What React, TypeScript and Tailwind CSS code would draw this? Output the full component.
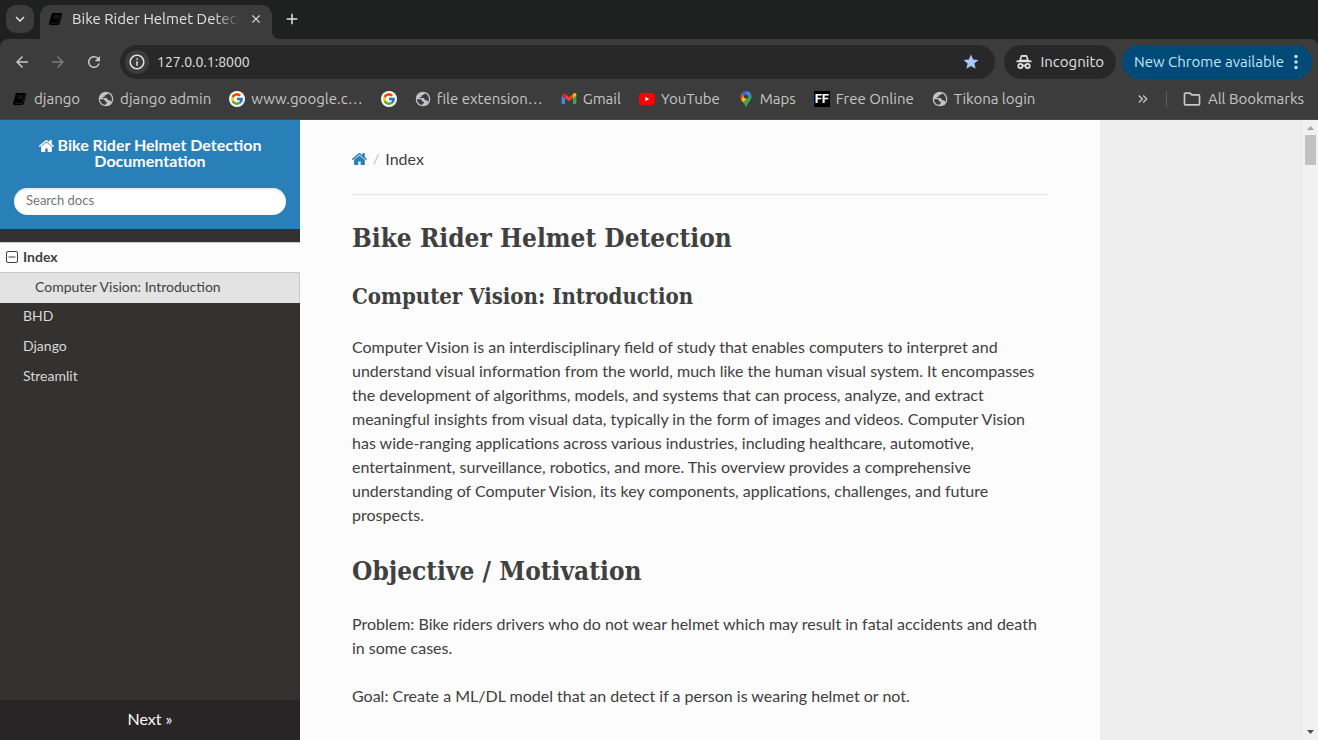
import type { ReactNode } from "react";
import { FcGoogle } from "react-icons/fc";
import {
  MdArrowBack,
  MdArrowForward,
  MdRefresh,
  MdStar,
  MdInfoOutline,
  MdClose,
  MdAdd,
  MdKeyboardArrowDown,
  MdOutlineFolder,
  MdKeyboardDoubleArrowRight,
} from "react-icons/md";

const HOME_PATH =
  "M1408 992v480q0 26-19 45t-45 19h-384v-384h-256v384h-384q-26 0-45-19t-19-45v-480q0-1 .5-3t.5-3l575-474 575 474q1 2 1 6zm223-69l-62 74q-8 9-21 11h-3q-13 0-21-7l-692-577-692 577q-12 8-24 7-13-2-21-11l-62-74q-8-10-7-23.5t11-21.5l719-599q32-26 76-26t76 26l244 204v-195q0-14 9-23t23-9h192q14 0 23 9t9 23v408l219 182q10 8 11 21.5t-7 23.5z";

function HomeIcon({ className }: { className: string }) {
  return (
    <svg viewBox="30 253 1612 1283" className={className} fill="currentColor" aria-hidden="true">
      <path d={HOME_PATH} />
    </svg>
  );
}

function BookIcon() {
  return (
    <svg viewBox="0 0 16 16" className="size-4 shrink-0" aria-hidden="true">
      <path
        d="M5.200 2h7.600c1.100 0 1.700.8 1.400 1.800L11.900 12.300c-.3 1.100-1.100 1.700-2.200 1.700H2.800c-1.200 0-2-.9-1.700-2.100L3.600 3.300C3.900 2.500 4.400 2 5.200 2z"
        fill="#000"
      />
      <path d="M6.200 5h5M5.600 7h5" stroke="#3a3a3a" strokeWidth=".7" />
      <path d="M2.600 12.200h7c.6 0 .9-.2 1.100-.8L13.200 3.600" stroke="#333" strokeWidth=".6" fill="none" />
    </svg>
  );
}

function GlobeIcon() {
  return (
    <svg viewBox="0 0 16 16" className="size-4 shrink-0" aria-hidden="true">
      <circle cx="8" cy="8" r="7.300" fill="#c0c4c9" />
      <path
        d="M9.800 2.200C9.700 3.300 9 3.900 8 3.900c-.8 0-1.200.4-1.200 1.100 0 .6-.4.9-1 .9-.9 0-1.300.5-1.300 1.100h3.200c1.200 0 1.900.6 1.900 1.500 0 .5.300.8.800.8h.9c.8 0 1.300.4 1.500 1.200l.3.600c.6-.9.9-1.900.9-3.100 0-2.700-1.700-4.900-4.200-5.800z"
        fill="#3c3c3c"
      />
      <path d="M2 8.200h3c1.300 0 1.900.7 1.900 1.700 0 .4.300.6.700.6h.6c.4 0 .6.300.6.700v.7c0 .6-.4.9-1 .9h-.3v1.100C4.500 13.700 2.200 11.300 2 8.200z" fill="#3c3c3c" />
    </svg>
  );
}

function GoogleIcon() {
  return (
    <span className="flex size-4 shrink-0 items-center justify-center rounded-full bg-white">
      <FcGoogle className="size-[14px]" />
    </span>
  );
}

function GmailIcon() {
  return (
    <svg viewBox="52 42 88 66" className="h-[11px] w-4 shrink-0" aria-hidden="true">
      <path fill="#4285f4" d="M58 108h14V74L52 59v43c0 3.320 2.690 6 6 6" />
      <path fill="#34a853" d="M120 108h14c3.320 0 6-2.690 6-6V59l-20 15" />
      <path fill="#fbbc04" d="M120 48v26l20-15v-8c0-7.420-8.470-11.650-14.400-7.200" />
      <path fill="#ea4335" d="M72 74V48l24 18 24-18v26L96 92" />
      <path fill="#c5221f" d="M52 51v8l20 15V48l-5.600-4.200c-5.940-4.450-14.400-.22-14.400 7.200" />
    </svg>
  );
}

function YouTubeIcon() {
  return (
    <svg viewBox="0 0 16 12" className="h-3 w-4 shrink-0" aria-hidden="true">
      <rect width="16" height="12" rx="3" fill="#f00" />
      <path d="M6.400 3.800v4.400l3.800-2.200z" fill="#fff" />
    </svg>
  );
}

function MapsIcon() {
  return (
    <svg viewBox="0 0 92.300 132.300" className="h-4 w-4 shrink-0" aria-hidden="true">
      <path fill="#1a73e8" d="M60.200 2.200C55.800.8 51 0 46.100 0 32 0 19.300 6.400 10.800 16.500l21.800 18.300L60.200 2.200z" />
      <path fill="#ea4335" d="M10.800 16.500C4.100 24.500 0 34.900 0 46.100c0 8.700 1.700 15.700 4.600 22l28-33.300-21.800-18.300z" />
      <path fill="#4285f4" d="M46.200 28.500c9.800 0 17.700 7.900 17.700 17.700 0 4.300-1.600 8.300-4.200 11.400 0 0 13.900-16.600 27.500-32.700-5.600-10.800-15.300-19-27-22.700L32.600 34.800c3.300-3.800 8.100-6.300 13.600-6.300" />
      <path fill="#fbbc04" d="M46.200 63.800c-9.800 0-17.700-7.900-17.700-17.700 0-4.300 1.500-8.300 4.100-11.300l-28 33.300c4.800 10.600 12.800 19.200 21 29.900l34.100-40.500c-3.300 3.900-8.100 6.300-13.500 6.300" />
      <path fill="#34a853" d="M59.100 109.200c15.400-24.100 33.300-35 33.300-63 0-7.700-1.900-14.900-5.200-21.300L25.600 98c2.600 3.400 5.300 7.300 7.900 11.300 9.400 14.500 6.800 23.100 12.800 23.100s3.400-8.700 12.800-23.200" />
    </svg>
  );
}

function FreeFontIcon() {
  return (
    <span className="flex size-4 shrink-0 items-center justify-center bg-black font-[Roboto] text-[13px] leading-4 font-bold text-white">
      FF
    </span>
  );
}

function IncognitoIcon() {
  return (
    <svg viewBox="0 0 16 16" className="size-4 shrink-0" fill="none" stroke="#e3e3e3" aria-hidden="true">
      <path d="M4 6.600 5.200 2.700c.2-.9 1-1.100 1.700-.8.7.3 1.500.3 2.200 0 .7-.3 1.500-.1 1.700.8L12 6.600z" strokeWidth="1.700" />
      <path d="M.5 7.300h15" strokeWidth="1.800" />
      <circle cx="4.400" cy="12" r="2.100" strokeWidth="1.800" />
      <circle cx="11.600" cy="12" r="2.100" strokeWidth="1.800" />
      <path d="M6.400 11.800q1.600-.8 3.200 0" strokeWidth="1.600" />
    </svg>
  );
}

const bookmarks: { icon: ReactNode; label: string }[] = [
  { icon: <BookIcon />, label: "django" },
  { icon: <GlobeIcon />, label: "django admin" },
  { icon: <GoogleIcon />, label: "www.google.c…" },
  { icon: <GoogleIcon />, label: "" },
  { icon: <GlobeIcon />, label: "file extension…" },
  { icon: <GmailIcon />, label: "Gmail" },
  { icon: <YouTubeIcon />, label: "YouTube" },
  { icon: <MapsIcon />, label: "Maps" },
  { icon: <FreeFontIcon />, label: "Free Online" },
  { icon: <GlobeIcon />, label: "Tikona login" },
];

function BrowserChrome() {
  return (
    <header className="shrink-0 bg-[#1f2020] font-['Ubuntu','Noto_Sans',sans-serif] text-[15px] leading-5 text-[#e3e3e3]">
      <div className="flex h-[39px] items-end pl-[6px]">
        <button aria-label="Search tabs" className="mb-[6px] flex size-7 items-center justify-center rounded-[10px] bg-[#3c3c3c]">
          <MdKeyboardArrowDown className="size-[18px]" />
        </button>
        <div className="ml-[6px] flex h-[34px] w-[232px] items-center rounded-t-[10px] bg-[#3c3c3c] pr-2 pb-[6px] pl-2">
          <BookIcon />
          <span className="ml-2 min-w-0 flex-1 overflow-hidden whitespace-nowrap [mask-image:linear-gradient(to_right,#000_85%,transparent)]">
            Bike Rider Helmet Detection
          </span>
          <button aria-label="Close tab" className="ml-2 flex size-4 items-center justify-center">
            <MdClose className="size-[14px]" />
          </button>
        </div>
        <span aria-hidden="true" className="size-2 bg-[radial-gradient(circle_at_top_right,transparent_8px,#3c3c3c_8px)]" />
        <button aria-label="New tab" className="mb-[10px] ml-[2px] flex size-5 items-center justify-center">
          <MdAdd className="size-[18px]" />
        </button>
      </div>
      <div className="rounded-t-lg bg-[#3c3c3c]">
        <div className="flex h-[46px] items-center pr-[6px] pl-3">
          <button aria-label="Back" className="flex size-5 items-center justify-center">
            <MdArrowBack className="size-[18px] text-[#c7c7c7]" />
          </button>
          <button aria-label="Forward" className="ml-4 flex size-5 items-center justify-center">
            <MdArrowForward className="size-[18px] text-[#7c7c7c]" />
          </button>
          <button aria-label="Reload" className="ml-4 flex size-5 items-center justify-center">
            <MdRefresh className="size-[18px] text-[#c7c7c7]" />
          </button>
          <div className="ml-4 flex h-[34px] flex-1 items-center rounded-full bg-[#282828] pr-[15px] pl-[5px]">
            <button aria-label="Site information" className="flex size-6 items-center justify-center rounded-full bg-[#3c3c3c]">
              <MdInfoOutline className="size-[18px]" />
            </button>
            <input
              aria-label="Address"
              defaultValue="127.0.0.1:8000"
              className="ml-2 min-w-0 flex-1 bg-transparent text-sm outline-none"
            />
            <button aria-label="Edit bookmark">
              <MdStar className="size-[18px] text-[#a8c7fa]" />
            </button>
          </div>
          <div className="ml-[9px] flex h-[34px] items-center gap-2 rounded-full bg-[#282828] px-3">
            <IncognitoIcon />
            <span>Incognito</span>
          </div>
          <button className="ml-[6px] flex h-[34px] items-center gap-1 rounded-full bg-[#004a77] pr-2 pl-3 text-[#c2e7ff]">
            New Chrome available
            <svg viewBox="0 0 16 16" className="size-4" fill="currentColor" aria-hidden="true">
              <circle cx="8" cy="2.500" r="1.700" />
              <circle cx="8" cy="8" r="1.700" />
              <circle cx="8" cy="13.500" r="1.700" />
            </svg>
          </button>
        </div>
        <nav aria-label="Bookmarks" className="flex h-[35px] items-center border-b border-[#474747] pr-[14px] pb-[7px] pl-3 text-[#c7c7c7]">
          <ul className="flex items-center gap-[18px]">
            {bookmarks.map((b, i) => (
              <li key={i}>
                <a href="#" aria-label={b.label || "Google"} className="flex items-center gap-[6px] whitespace-nowrap">
                  {b.icon}
                  {b.label && <span>{b.label}</span>}
                </a>
              </li>
            ))}
          </ul>
          <button aria-label="More bookmarks" className="ml-auto">
            <MdKeyboardDoubleArrowRight className="size-4" />
          </button>
          <span className="mx-[15px] h-4 w-px bg-[#5f5f5f]" />
          <button className="flex items-center gap-[6px] whitespace-nowrap">
            <MdOutlineFolder className="size-5" />
            All Bookmarks
          </button>
        </nav>
      </div>
    </header>
  );
}

function Sidebar() {
  return (
    <aside className="flex w-[300px] shrink-0 flex-col bg-[#343131] text-sm leading-[18px] text-[#d9d9d9]">
      <div className="bg-[#2980b9] px-[14px] pt-[17px] pb-[14px] text-center">
        <a href="#" className="block text-base leading-4 font-bold text-[#fcfcfc]">
          <HomeIcon className="mr-1 inline h-3 w-[15px] align-[-1px]" />
          Bike Rider Helmet Detection Documentation
        </a>
        <input
          type="text"
          aria-label="Search docs"
          placeholder="Search docs"
          className="mt-[19px] block h-[27px] w-full rounded-full bg-white px-3 pb-[3px] text-[13px] text-[#333] inset-shadow-[0_1px_3px_#ddd] placeholder:text-[#757575]"
        />
      </div>
      <nav aria-label="Contents" className="mt-[13px]">
        <a href="#" className="flex h-[30px] items-center border-t border-[#c9c9c9] bg-[#fcfcfc] pb-[2px] pl-[6px] font-bold text-[#404040]">
          <svg viewBox="0 0 12 12" className="mr-[5px] size-3" fill="none" stroke="#404040" aria-hidden="true">
            <rect x=".5" y=".5" width="11" height="11" rx="1.500" />
            <path d="M2.500 6h7" />
          </svg>
          Index
        </a>
        <a href="#" className="flex h-[31px] items-center border-t border-r border-[#c9c9c9] bg-[#e3e3e3] pb-[2px] pl-[35px] text-[#404040]">
          Computer Vision: Introduction
        </a>
        {["BHD", "Django", "Streamlit"].map((name) => (
          <a key={name} href="#" className="flex h-[30px] items-center pb-1 pl-[23px]">
            {name}
          </a>
        ))}
      </nav>
      <a href="#" className="mt-auto block bg-[#272525] pt-[7px] pb-[9px] text-center text-base leading-6 text-[#fcfcfc]">
        Next »
      </a>
    </aside>
  );
}

function Article() {
  const heading = "font-['Roboto_Slab','DejaVu_Serif_Condensed','DejaVu_Serif',serif] font-bold";
  return (
    <main className="w-full max-w-[800px] bg-[#fcfcfc] px-[52px] pt-[27px] text-base leading-6 text-[#404040]">
      <nav aria-label="Breadcrumb" className="flex items-center">
        <a href="#" aria-label="Home" className="text-[#2980b9]">
          <HomeIcon className="h-3 w-[15px]" />
        </a>
        <span className="mx-[6px] text-sm text-[#c0c0c0]">/</span>
        <span>Index</span>
      </nav>
      <hr className="mt-[23px] border-[#e1e4e5]" />
      <h1 className={`${heading} mt-[23px] text-[26px] leading-10`}>Bike Rider Helmet Detection</h1>
      <h2 className={`${heading} mt-5 text-[22px] leading-9`}>Computer Vision: Introduction</h2>
      <p className="mt-[21px]">
        Computer Vision is an interdisciplinary field of study that enables computers to interpret and understand
        visual information from the world, much like the human visual system. It encompasses the development of
        algorithms, models, and systems that can process, analyze, and extract meaningful insights from visual data,
        typically in the form of images and videos. Computer Vision has wide-ranging applications across various
        industries, including healthcare, automotive, entertainment, surveillance, robotics, and more. This overview
        provides a comprehensive understanding of Computer Vision, its key components, applications, challenges, and
        future prospects.
      </p>
      <h1 className={`${heading} mt-6 text-[26px] leading-10`}>Objective / Motivation</h1>
      <p className="mt-[21px]">
        Problem: Bike riders drivers who do not wear helmet which may result in fatal accidents and death in some
        cases.
      </p>
      <p className="mt-6">Goal: Create a ML/DL model that an detect if a person is wearing helmet or not.</p>
    </main>
  );
}

function Scrollbar() {
  return (
    <div aria-hidden="true" className="ml-auto flex w-[15px] shrink-0 flex-col items-center bg-[#f1f1f1]">
      <svg viewBox="0 0 15 15" className="size-[15px]">
        <path d="M4 10h7L7.500 6z" fill="#a3a3a3" />
      </svg>
      <span className="h-[30px] w-[11px] bg-[#c1c1c1]" />
      <svg viewBox="0 0 15 15" className="mt-auto size-[15px]">
        <path d="M4 5h7L7.500 9z" fill="#505050" />
      </svg>
    </div>
  );
}

export default function App() {
  return (
    <div className="flex h-screen flex-col overflow-hidden">
      <BrowserChrome />
      <div className="flex min-h-0 flex-1 bg-[#eeeeee] font-['Lato',sans-serif]">
        <Sidebar />
        <Article />
        <Scrollbar />
      </div>
    </div>
  );
}
